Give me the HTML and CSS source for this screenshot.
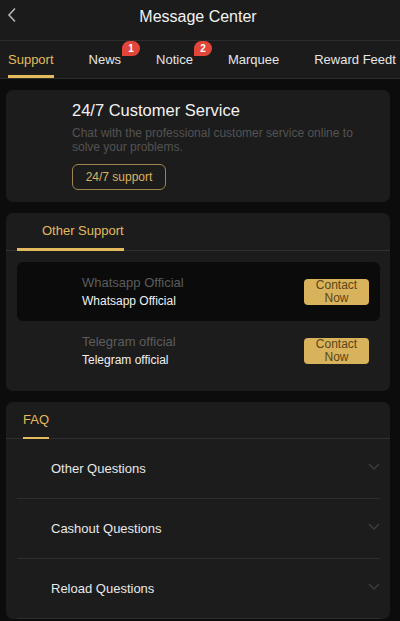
FILE: index.html
```html
<!DOCTYPE html>
<html lang="en">
<head>
    <meta charset="UTF-8">
    <meta name="viewport" content="width=device-width, initial-scale=1.0">
    <title>Message Center</title>
    <link rel="stylesheet" href="styles.css">
</head>
<body>

<div class="page">
    <!-- Header -->
    <div class="header">
        <span class="back">
            <svg width="10" height="16" viewBox="0 0 10 16"><path d="M8 1.5 L2 8 L8 14.5" fill="none" stroke="#b5b5b5" stroke-width="1.6"/></svg>
        </span>
        <div class="title">Message Center</div>
    </div>

    <!-- Tabs -->
    <div class="tabs">
        <div class="tab active">Support</div>
        <div class="tab">News<span class="badge">1</span></div>
        <div class="tab">Notice<span class="badge">2</span></div>
        <div class="tab">Marquee</div>
        <div class="tab">Reward Feedt</div>
    </div>

    <div class="content">
        <!-- Customer service card -->
        <div class="card service">
            <div class="service-title">24/7 Customer Service</div>
            <div class="service-desc">Chat with the professional customer service online to solve your problems.</div>
            <button class="btn-outline">24/7 support</button>
        </div>

        <!-- Other support -->
        <div class="card">
            <div class="card-tabs">
                <div class="card-tab wide">Other Support</div>
            </div>
            <div class="contacts">
                <div class="contact selected">
                    <div class="contact-text">
                        <div class="contact-name">Whatsapp Official</div>
                        <div class="contact-sub">Whatsapp Official</div>
                    </div>
                    <button class="btn-contact">Contact<br>Now</button>
                </div>
                <div class="contact">
                    <div class="contact-text">
                        <div class="contact-name">Telegram official</div>
                        <div class="contact-sub">Telegram official</div>
                    </div>
                    <button class="btn-contact">Contact<br>Now</button>
                </div>
            </div>
        </div>

        <!-- FAQ -->
        <div class="card faq">
            <div class="card-tabs">
                <div class="card-tab">FAQ</div>
            </div>
            <div class="faq-list">
                <div class="faq-item">
                    <span>Other Questions</span>
                    <svg class="chev" width="12" height="8" viewBox="0 0 12 8"><path d="M1 1 L6 6 L11 1" fill="none" stroke="#3e3e3e" stroke-width="1.4"/></svg>
                </div>
                <div class="faq-item">
                    <span>Cashout Questions</span>
                    <svg class="chev" width="12" height="8" viewBox="0 0 12 8"><path d="M1 1 L6 6 L11 1" fill="none" stroke="#3e3e3e" stroke-width="1.4"/></svg>
                </div>
                <div class="faq-item">
                    <span>Reload Questions</span>
                    <svg class="chev" width="12" height="8" viewBox="0 0 12 8"><path d="M1 1 L6 6 L11 1" fill="none" stroke="#3e3e3e" stroke-width="1.4"/></svg>
                </div>
            </div>
        </div>
    </div>
</div>

</body>
</html>
```

FILE: styles.css
```css
body {
    margin: 0;
    padding: 0;
    background-color: #0c0c0c;
    font-family: "Liberation Sans", Arial, sans-serif;
    color: #fff;
}
.page {
    width: 400px;
    height: 621px;
    overflow: hidden;
}
.header {
    height: 40px;
    background-color: #1b1b1b;
    border-bottom: 1px solid #2c2c2c;
    display: flex;
    align-items: center;
    justify-content: center;
    position: relative;
}
.back {
    position: absolute;
    left: 7px;
    top: 7px;
}
.title {
    font-size: 16px;
    color: #f2f2f2;
    margin: 0 0 6px -4px;
}
.tabs {
    height: 37px;
    background-color: #1b1b1b;
    border-bottom: 1px solid #2c2c2c;
    display: flex;
    gap: 35px;
    padding-left: 8px;
    white-space: nowrap;
    overflow: hidden;
}
.tab {
    position: relative;
    font-size: 13px;
    color: #e6e6e6;
    line-height: 37px;
    flex-shrink: 0;
}
.tab.active {
    color: #e2bb5e;
}
.tab.active::after {
    content: "";
    position: absolute;
    left: 0;
    right: 0;
    bottom: 0;
    height: 3px;
    background-color: #e2bb5e;
}
.badge {
    position: absolute;
    right: -19px;
    top: 0;
    width: 18px;
    height: 15px;
    background-color: #e2453a;
    border-radius: 8px 8px 8px 0;
    color: #fff;
    font-size: 10px;
    font-weight: bold;
    line-height: 15px;
    text-align: center;
}
.content {
    padding: 11px 10px 0 6px;
    display: flex;
    flex-direction: column;
    gap: 11px;
}
.card {
    background-color: #1c1c1c;
    border-radius: 7px;
}
.service {
    padding: 10px 10px 12px 66px;
}
.service-title {
    font-size: 16.5px;
    color: #f2f2f2;
    line-height: 20px;
}
.service-desc {
    font-size: 12px;
    color: #535353;
    line-height: 14px;
    margin-top: 6px;
    padding-right: 10px;
}
.btn-outline {
    margin-top: 10px;
    width: 94px;
    height: 26px;
    background: transparent;
    border: 1px solid #9c864d;
    border-radius: 6px;
    color: #d8b462;
    font-family: inherit;
    font-size: 12px;
    padding: 0;
}
.card-tabs {
    height: 37px;
    border-bottom: 1px solid #303030;
    display: flex;
}
.card-tab {
    position: relative;
    font-size: 13px;
    color: #e2bb5e;
    line-height: 36px;
    margin-left: 17px;
}
.card-tab::after {
    content: "";
    position: absolute;
    left: 0;
    right: 0;
    bottom: -1px;
    height: 2px;
    background-color: #e2bb5e;
}
.card-tab.wide {
    margin-left: 11px;
    padding-left: 25px;
}
.card-tab.wide::after {
    height: 3px;
}
.faq .card-tabs {
    height: 36px;
}
.faq .card-tab {
    line-height: 35px;
}
.contacts {
    padding: 11px 10px 11px 11px;
}
.contact {
    height: 59px;
    display: flex;
    align-items: center;
    padding: 0 11px 0 65px;
    border-radius: 6px;
}
.contact.selected {
    background-color: #0b0b0b;
}
.contact-text {
    flex: 1;
}
.contact-name {
    font-size: 13px;
    color: #5c5c5c;
    line-height: 17px;
}
.contact-sub {
    font-size: 12px;
    color: #f0f0f0;
    line-height: 17px;
    margin-top: 2px;
}
.btn-contact {
    width: 65px;
    height: 26px;
    background-color: #d9b35c;
    border: none;
    border-radius: 4px;
    color: #5a4615;
    font-family: inherit;
    font-size: 12px;
    line-height: 13px;
    padding: 0;
}
.faq-list {
    padding: 0 10px 0 11px;
}
.faq-item {
    height: 59px;
    border-bottom: 1px solid #2e2e2e;
    display: flex;
    align-items: center;
    justify-content: space-between;
    padding: 0 0 0 34px;
    font-size: 13px;
    color: #e8e8e8;
}
.chev {
    margin-top: -4px;
}
```
